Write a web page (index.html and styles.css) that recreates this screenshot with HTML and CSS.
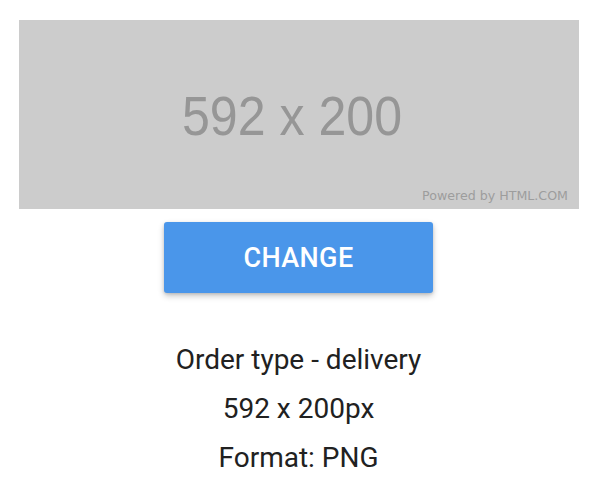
FILE: index.html
```html
<!DOCTYPE html>
<html lang="en">
<head>
  <meta charset="UTF-8">
  <meta name="viewport" content="width=device-width, initial-scale=1.0">
  <title>Order Preview</title>
  <link rel="stylesheet" href="styles.css">
</head>
<body>
  <div class="page">
    <svg class="preview" width="560" height="189" viewBox="0 0 560 189">
      <rect width="560" height="189" fill="#cccccc"/>
      <text x="163" y="115" class="preview-size" textLength="220" lengthAdjust="spacingAndGlyphs">592 x 200</text>
      <text x="403" y="180" class="preview-credit" textLength="146" lengthAdjust="spacingAndGlyphs">Powered by HTML.COM</text>
    </svg>

    <button class="change-btn">CHANGE</button>

    <div class="order-info">
      <p>Order type - delivery</p>
      <p>592 x 200px</p>
      <p>Format: PNG</p>
    </div>
  </div>
</body>
</html>
```

FILE: styles.css
```css
body {
  margin: 0;
  font-family: Roboto, "Noto Sans", sans-serif;
  background: #fff;
}
.page {
  padding: 20px 18px 0 19px;
  display: flex;
  flex-direction: column;
  align-items: center;
}
.preview {
  display: block;
  align-self: flex-start;
}
.preview-size {
  font-family: "Liberation Sans", Arial, sans-serif;
  font-size: 56px;
  fill: #969696;
}
.preview-credit {
  font-family: "DejaVu Sans", sans-serif;
  font-size: 12.5px;
  fill: #9d9d9d;
}
.change-btn {
  margin-top: 13px;
  width: 269px;
  height: 71px;
  background-color: #4a96ea;
  color: #fff;
  border: none;
  border-radius: 3px;
  font-family: Roboto, sans-serif;
  font-weight: 500;
  font-size: 27px;
  letter-spacing: 0.4px;
  box-shadow: 0 3px 6px rgba(0,0,0,0.22), 0 1px 3px rgba(0,0,0,0.12);
  cursor: pointer;
}
.order-info {
  margin-top: 42px;
  text-align: center;
  color: #212121;
  font-size: 28px;
  line-height: 49px;
}
.order-info p {
  margin: 0;
}
```
